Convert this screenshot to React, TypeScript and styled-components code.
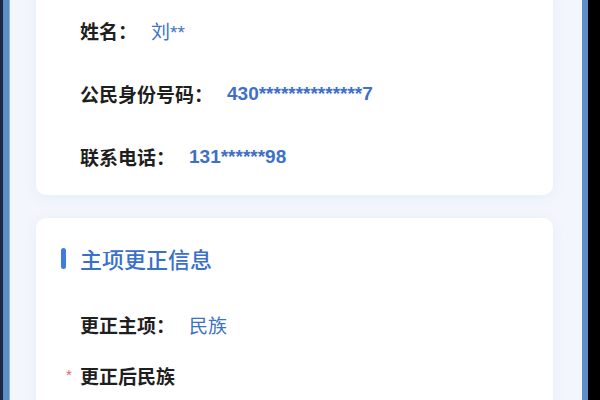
import React from "react";
import styled, { createGlobalStyle } from "styled-components";

const GlobalStyle = createGlobalStyle`
  html, body {
    margin: 0;
    padding: 0;
    background: #000;
  }
  body {
    font-family: "Liberation Sans", "Noto Sans CJK SC", sans-serif;
  }
`;

const Frame = styled.div`
  display: flex;
  width: 600px;
  height: 400px;
  overflow: hidden;
`;

const LeftEdge = styled.div`
  display: flex;
  flex: none;
  &::before {
    content: "";
    width: 3px;
    background: #1d2940;
  }
  &::after {
    content: "";
    width: 6px;
    background: #5c8fc8;
    border-right: 1px solid #8fb6e0;
  }
`;

const RightEdge = styled.div`
  display: flex;
  flex: none;
  &::before {
    content: "";
    width: 6px;
    background: #5b8ec6;
  }
  &::after {
    content: "";
    width: 12px;
    background: #000;
  }
`;

const Content = styled.div`
  flex: 1;
  display: flex;
  flex-direction: column;
  gap: 23px;
  padding: 0 29px 0 26px;
  background: #f3f6fc;
`;

const Card = styled.section<{ $clipped?: boolean }>`
  background: #fff;
  border-radius: 10px;
  box-shadow: 0 2px 14px rgba(70, 110, 190, 0.07);
  padding: ${(p) => (p.$clipped ? "33px 24px 25px 44px" : "25px 24px 60px 25px")};
  margin-top: ${(p) => (p.$clipped ? "-16px" : "0")};
  display: flex;
  flex-direction: column;
  flex: none;
`;

const InfoList = styled.div`
  display: flex;
  flex-direction: column;
  gap: 36px;
`;

const Row = styled.div<{ $mt?: number }>`
  display: flex;
  align-items: center;
  height: 27px;
  padding-left: 19px;
  margin-top: ${(p) => p.$mt ?? 0}px;
`;

const InfoRow = styled(Row)`
  padding-left: 0;
`;

const Label = styled.span<{ $required?: boolean }>`
  position: relative;
  font-size: 19px;
  font-weight: 600;
  color: #1f1f1f;
  margin-right: 14px;
  ${(p) =>
    p.$required &&
    `&::before {
      content: "*";
      position: absolute;
      left: -14px;
      top: 4px;
      font-size: 15px;
      font-weight: 400;
      color: #e0606a;
    }`}
`;

const Value = styled.span<{ $bold?: boolean }>`
  font-size: 19px;
  font-weight: ${(p) => (p.$bold ? 700 : 400)};
  color: #3d70c6;
`;

const SectionTitle = styled.h3`
  display: flex;
  align-items: center;
  gap: 14px;
  height: 30px;
  margin: 0;
  font-size: 22px;
  font-weight: 500;
  color: #3a6fcc;
  &::before {
    content: "";
    width: 5px;
    height: 21px;
    border-radius: 3px;
    background: #3f7ce0;
  }
`;

const applicant = [
  { label: "姓名：", value: "刘**", bold: false },
  { label: "公民身份号码：", value: "430**************7", bold: true },
  { label: "联系电话：", value: "131******98", bold: true },
];

export default function App() {
  return (
    <>
      <GlobalStyle />
      <Frame>
        <LeftEdge />
        <Content>
          <Card $clipped>
            <InfoList>
              {applicant.map((item) => (
                <InfoRow key={item.label}>
                  <Label>{item.label}</Label>
                  <Value $bold={item.bold}>{item.value}</Value>
                </InfoRow>
              ))}
            </InfoList>
          </Card>
          <Card>
            <SectionTitle>主项更正信息</SectionTitle>
            <Row $mt={38}>
              <Label>更正主项：</Label>
              <Value>民族</Value>
            </Row>
            <Row $mt={24}>
              <Label $required>更正后民族</Label>
            </Row>
          </Card>
        </Content>
        <RightEdge />
      </Frame>
    </>
  );
}
